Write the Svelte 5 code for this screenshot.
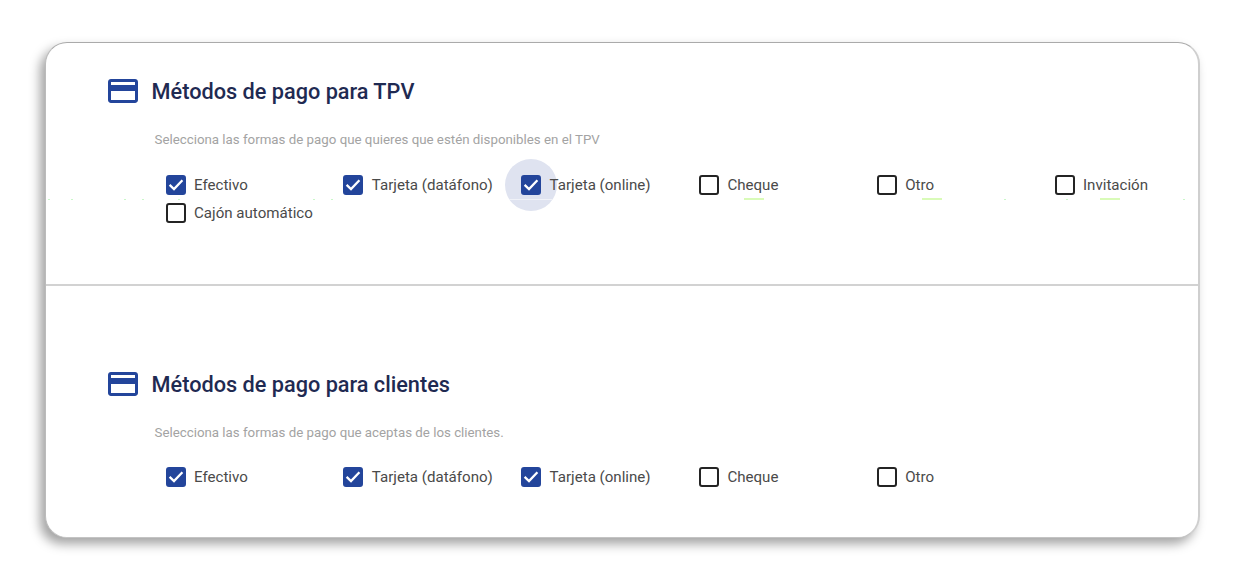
<script>
  const tpv = [
    { label: 'Efectivo', checked: true },
    { label: 'Tarjeta (datáfono)', checked: true },
    { label: 'Tarjeta (online)', checked: true, focused: true },
    { label: 'Cheque', checked: false },
    { label: 'Otro', checked: false },
    { label: 'Invitación', checked: false },
    { label: 'Cajón automático', checked: false }
  ];
  const clientes = [
    { label: 'Efectivo', checked: true },
    { label: 'Tarjeta (datáfono)', checked: true },
    { label: 'Tarjeta (online)', checked: true },
    { label: 'Cheque', checked: false },
    { label: 'Otro', checked: false }
  ];
  const sections = [
    {
      title: 'Métodos de pago para TPV',
      hint: 'Selecciona las formas de pago que quieres que estén disponibles en el TPV',
      options: tpv
    },
    {
      title: 'Métodos de pago para clientes',
      hint: 'Selecciona las formas de pago que aceptas de los clientes.',
      options: clientes
    }
  ];
  // capture artefacts in the source screenshot, along y=199
  const specks = [744, 922, 1100];
  const dots = [48, 71, 124, 142, 178, 313, 331, 1004, 1066, 1183];
</script>

<div class="page">
  <div class="card">
    {#each sections as section, i}
      <section class:first={i === 0}>
        <h2>
          <svg class="card-icon" viewBox="0 0 24 24" aria-hidden="true">
            <path d="M20 4H4c-1.11 0-1.99.89-1.99 2L2 18c0 1.11.89 2 2 2h16c1.11 0 2-.89 2-2V6c0-1.11-.89-2-2-2zm0 14H4v-6h16v6zm0-10H4V6h16v2z" />
          </svg>
          {section.title}
        </h2>
        <p class="hint">{section.hint}</p>
        <div class="options">
          {#each section.options as opt}
            <label class="option">
              <span class="box" class:checked={opt.checked}>
                {#if opt.focused}<span class="ripple"></span>{/if}
                {#if opt.checked}
                  <svg viewBox="0 0 20 20" aria-hidden="true">
                    <path d="M3.6 9.8l4.4 4.2 8.4-8.8" />
                  </svg>
                {/if}
              </span>
              <span class="text">{opt.label}</span>
            </label>
          {/each}
        </div>
      </section>
    {/each}
  </div>
  {#each specks as x}
    <span class="speck" style="left: {x}px"></span>
  {/each}
  {#each dots as x}
    <span class="speck dot" style="left: {x}px"></span>
  {/each}
  <span class="glare"></span>
</div>

<style>
  :global(body) {
    margin: 0;
    background: #fff;
  }

  .page {
    position: relative;
    box-sizing: border-box;
    width: 1244px;
    height: 580px;
    padding: 42px 45px;
    font-family: Roboto, "Liberation Sans", sans-serif;
    overflow: hidden;
  }

  .card {
    position: relative;
    z-index: 0;
    box-sizing: border-box;
    width: 1155px;
    height: 496px;
    background: #fff;
    border: 1px solid #c4c4c4;
    border-top-color: #aaa;
    border-right: 2px solid #cfcfcf;
    border-left: 1px solid #bbb;
    border-radius: 22px;
    box-shadow: -5px 6px 11px rgba(0, 0, 0, 0.36);
  }

  section {
    padding: 33px 0 0 62px;
  }

  section.first {
    height: 243px;
    box-sizing: border-box;
    border-bottom: 2px solid #d2d2d2;
  }

  section:not(.first) {
    padding-top: 83px;
  }

  section:not(.first) .options {
    margin-top: 22px;
  }

  h2 {
    display: flex;
    align-items: center;
    gap: 10.6px;
    margin: 0 0 0 -3px;
    height: 30px;
    font-size: 21.7px;
    font-weight: 500;
    color: #1f2a52;
  }

  .card-icon {
    width: 36px;
    height: 36px;
    fill: #23459b;
    flex: none;
  }

  .hint {
    margin: 26px 0 0 46.5px;
    font-size: 13.3px;
    line-height: 16px;
    color: #a3a3a3;
  }

  .options {
    display: grid;
    grid-template-columns: repeat(6, 177.8px);
    grid-auto-rows: 28px;
    margin: 23px 0 0 57.6px;
  }

  .option {
    display: flex;
    align-items: center;
    gap: 8.4px;
    height: 28px;
    font-size: 15.1px;
    color: #4a4a4a;
    white-space: nowrap;
  }

  .box {
    position: relative;
    box-sizing: border-box;
    width: 20px;
    height: 20px;
    border: 2px solid #242424;
    border-radius: 3px;
    flex: none;
  }

  .box.checked {
    background: #23459b;
    border-color: #23459b;
  }

  .box svg {
    position: absolute;
    left: -2px;
    top: -2px;
    width: 20px;
    height: 20px;
    fill: none;
    stroke: #fff;
    stroke-width: 2.3;
  }

  .ripple {
    position: absolute;
    left: -18px;
    top: -18px;
    width: 52px;
    height: 52px;
    border-radius: 50%;
    background: #dfe3f0;
    z-index: -1;
  }

  .text {
    position: relative;
  }

  .speck {
    position: absolute;
    top: 198px;
    width: 20px;
    height: 2px;
    background: #d9fbb8;
  }

  .dot {
    width: 2px;
    height: 1px;
    top: 199px;
    background: #c9f7c9;
  }

  .glare {
    position: absolute;
    left: 509px;
    top: 199px;
    width: 44px;
    height: 1px;
    background: #f0f2f8;
  }
</style>
